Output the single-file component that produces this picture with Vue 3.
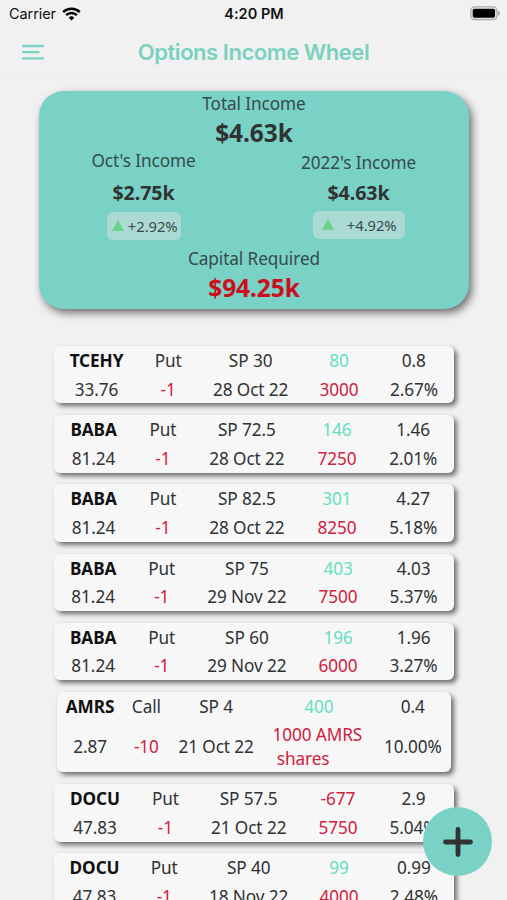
<template>
  <div class="screen">
    <div class="status-bar">
      <div class="carrier">
        <span>Carrier</span>
        <svg class="wifi" viewBox="0 0 19 14" width="19" height="14">
          <path d="M1.2 5.1a11.8 11.8 0 0 1 16.6 0" />
          <path d="M4.1 8.2a7.7 7.7 0 0 1 10.8 0" />
          <path class="dot" d="M9.5 13.6l-2.7-2.9a3.8 3.8 0 0 1 5.4 0z" />
        </svg>
      </div>
      <span class="time">4:20 PM</span>
      <svg class="battery" viewBox="0 0 31 15" width="31" height="15">
        <rect class="shell" x="0.9" y="0.9" width="26" height="12.6" rx="3.6" />
        <rect x="2.7" y="2.7" width="22.4" height="9" rx="1.6" />
        <path class="cap" d="M28 4.8c2.6.6 2.6 4.2 0 4.8z" />
      </svg>
    </div>

    <header class="nav-bar">
      <svg class="menu" viewBox="0 0 22 16" width="22" height="16">
        <path d="M1 2h20M1 8.2h15.5M1 14.4h20" />
      </svg>
      <h1>Options Income Wheel</h1>
    </header>

    <section class="summary">
      <div class="label">Total Income</div>
      <div class="amount large">$4.63k</div>
      <div class="periods">
        <div class="period month">
          <div class="label">Oct's Income</div>
          <div class="amount">$2.75k</div>
          <div class="change"><i class="up"></i>+2.92%</div>
        </div>
        <div class="period year">
          <div class="label">2022's Income</div>
          <div class="amount">$4.63k</div>
          <div class="change"><i class="up"></i>+4.92%</div>
        </div>
      </div>
      <div class="label">Capital Required</div>
      <div class="amount large red">$94.25k</div>
    </section>

    <main class="options">
      <div
        v-for="(o, index) in options"
        :key="index"
        class="option"
        :class="{ shares: o.type === 'Call' }"
      >
        <div class="col">
          <div class="cell ticker">{{ o.ticker }}</div>
          <div class="cell second">{{ o.price }}</div>
        </div>
        <div class="col">
          <div class="cell">{{ o.type }}</div>
          <div class="cell second red">{{ o.qty }}</div>
        </div>
        <div class="col">
          <div class="cell">SP {{ o.strike }}</div>
          <div class="cell second">{{ o.expiry }}</div>
        </div>
        <div class="col collateral">
          <div class="cell" :class="o.income < 0 ? 'red' : 'green'">{{ o.income }}</div>
          <div class="cell second red">{{ o.collateral }}</div>
        </div>
        <div class="col">
          <div class="cell">{{ o.premium }}</div>
          <div class="cell second">{{ o.yield }}</div>
        </div>
      </div>
    </main>

    <button class="add" aria-label="Add option">
      <svg viewBox="0 0 30 30" width="30" height="30">
        <path d="M15 2.5v25M2.5 15h25" />
      </svg>
    </button>
  </div>
</template>

<script setup>
const options = [
  { ticker: "TCEHY", type: "Put", strike: "30", income: 80, premium: "0.8", price: "33.76", qty: -1, expiry: "28 Oct 22", collateral: "3000", yield: "2.67%" },
  { ticker: "BABA", type: "Put", strike: "72.5", income: 146, premium: "1.46", price: "81.24", qty: -1, expiry: "28 Oct 22", collateral: "7250", yield: "2.01%" },
  { ticker: "BABA", type: "Put", strike: "82.5", income: 301, premium: "4.27", price: "81.24", qty: -1, expiry: "28 Oct 22", collateral: "8250", yield: "5.18%" },
  { ticker: "BABA", type: "Put", strike: "75", income: 403, premium: "4.03", price: "81.24", qty: -1, expiry: "29 Nov 22", collateral: "7500", yield: "5.37%" },
  { ticker: "BABA", type: "Put", strike: "60", income: 196, premium: "1.96", price: "81.24", qty: -1, expiry: "29 Nov 22", collateral: "6000", yield: "3.27%" },
  { ticker: "AMRS", type: "Call", strike: "4", income: 400, premium: "0.4", price: "2.87", qty: -10, expiry: "21 Oct 22", collateral: "1000 AMRS\n shares", yield: "10.00%" },
  { ticker: "DOCU", type: "Put", strike: "57.5", income: -677, premium: "2.9", price: "47.83", qty: -1, expiry: "21 Oct 22", collateral: "5750", yield: "5.04%" },
  { ticker: "DOCU", type: "Put", strike: "40", income: 99, premium: "0.99", price: "47.83", qty: -1, expiry: "18 Nov 22", collateral: "4000", yield: "2.48%" }
];
</script>

<style>
body {
  background: #f1f1f1;
  overflow: hidden;
}
</style>

<style scoped>
.screen {
  position: relative;
  height: 900px;
  overflow: hidden;
  background: #f1f1f1;
  color: #303234;
  font-family: "Noto Sans", sans-serif;
  font-size: 17.2px;
  letter-spacing: -0.08px;
}

.status-bar {
  display: grid;
  grid-template-columns: 1fr auto 1fr;
  align-items: center;
  height: 27px;
  padding: 0 6px 0 9px;
  color: #111;
  font-family: Inter, sans-serif;
  font-size: 14.5px;
}

.carrier {
  display: flex;
  align-items: center;
  gap: 6px;
}

.wifi {
  fill: none;
  stroke: #000;
  stroke-width: 2.5;
}

.wifi .dot {
  fill: #000;
  stroke: none;
}

.time {
  margin-right: 2px;
  font-weight: 600;
  letter-spacing: 0.05px;
}

.battery {
  justify-self: end;
}

.battery .shell {
  fill: none;
  stroke: #aaa;
  stroke-width: 1.3;
}

.battery .cap {
  fill: #aaa;
}

.nav-bar {
  display: grid;
  grid-template-columns: 64px 1fr 64px;
  align-items: center;
  box-sizing: border-box;
  height: 52px;
  padding-bottom: 1px;
  border-bottom: 1px solid #ebebeb;
}

.menu {
  margin-left: 22px;
  fill: none;
  stroke: #79d2c4;
  stroke-width: 2.3;
  stroke-linecap: round;
}

h1 {
  margin: 0;
  color: #79d2be;
  font-family: Inter, sans-serif;
  font-size: 22px;
  font-weight: 600;
  letter-spacing: -0.45px;
  text-align: center;
}

.summary {
  box-sizing: border-box;
  width: 430px;
  height: 218px;
  margin: 12px 0 0 39px;
  border-radius: 25px;
  background: #79d2c5;
  box-shadow: 3px 4px 8px rgba(0, 0, 0, 0.55);
  text-align: center;
}

.label {
  height: 25px;
  line-height: 25px;
  color: #364b4b;
}

.amount {
  height: 39px;
  line-height: 39px;
  font-size: 19.6px;
  font-weight: 700;
}

.amount.large {
  height: 33px;
  line-height: 33px;
  font-size: 24.5px;
}

.red {
  color: #d0213e;
}

.amount.red {
  color: #c90f20;
}

.green {
  color: #63dfbd;
}

.periods {
  display: grid;
  grid-template-columns: 1fr 1fr;
  height: 97px;
}

.period {
  display: flex;
  flex-direction: column;
  align-items: center;
}

.month {
  margin-right: 6px;
}

.year {
  margin-right: 6px;
}

.year .label {
  height: 23px;
  padding-top: 1px;
}

.change {
  display: flex;
  align-items: center;
  justify-content: space-between;
  box-sizing: border-box;
  height: 28px;
  border-radius: 6px;
  background: #abdad4;
  color: #3a4a4a;
  font-size: 14.8px;
}

.month .label {
  margin-top: -1px;
}

.month .change {
  width: 74px;
  padding: 0 3px 1px 5px;
}

.year .change {
  width: 92px;
  margin-top: -1px;
  padding: 0 8px 1px 9px;
}

.up {
  border: 6px solid transparent;
  border-top: 0;
  border-bottom: 11px solid #6bd18b;
}

.options {
  display: flex;
  flex-direction: column;
  gap: 11.8px;
  margin: 37px 53.5px 0 54px;
}

.option {
  display: flex;
  justify-content: space-around;
  box-sizing: border-box;
  height: 57.4px;
  padding-top: 3px;
  border-radius: 6px;
  background: #f7f7f7;
  box-shadow: 3px 3px 5px rgba(0, 0, 0, 0.55);
}

.option.shares {
  height: 80.5px;
  margin: 0 3px;
}

.col {
  display: flex;
  flex-direction: column;
  align-items: center;
  white-space: pre;
}

.cell {
  line-height: 24px;
}

.second {
  margin-top: 4.6px;
}

.shares .second {
  margin-top: 4px;
}

.ticker {
  color: #111;
  font-weight: 700;
}

.shares .second {
  line-height: 48px;
}

.shares .collateral {
  width: 95px;
}

.shares .collateral .second {
  align-self: flex-start;
  padding-left: 1px;
  line-height: 24px;
}

.add {
  position: absolute;
  top: 807px;
  left: 423px;
  display: flex;
  align-items: center;
  justify-content: center;
  width: 69px;
  height: 69px;
  padding: 0;
  border: 0;
  border-radius: 50%;
  background: #79d2c5;
}

.add path {
  fill: none;
  stroke: #303234;
  stroke-width: 4.8;
  stroke-linecap: round;
}
</style>
